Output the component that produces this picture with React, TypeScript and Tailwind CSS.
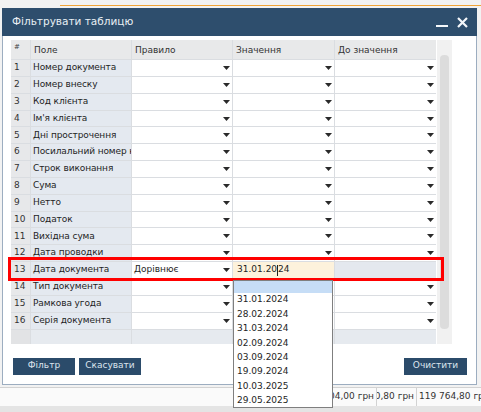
import React from 'react';

const fields = [
  'Номер документа',
  'Номер внеску',
  'Код клієнта',
  "Ім'я клієнта",
  'Дні прострочення',
  'Посилальний номер клієнта',
  'Строк виконання',
  'Сума',
  'Нетто',
  'Податок',
  'Вихідна сума',
  'Дата проводки',
  'Дата документа',
  'Тип документа',
  'Рамкова угода',
  'Серія документа',
];

const dates = [
  '31.01.2024',
  '28.02.2024',
  '31.03.2024',
  '02.09.2024',
  '03.09.2024',
  '19.09.2024',
  '10.03.2025',
  '29.05.2025',
];

const Arrow = () => (
  <svg width="7" height="4" viewBox="0 0 7 4" className="absolute right-[2px] top-[6px]">
    <path d="M0 0H7L3.5 4Z" fill="#2a2a2a" />
  </svg>
);

const DropCell = ({ children, arrow = true, className = 'bg-white' }: { children?: React.ReactNode; arrow?: boolean; className?: string }) => (
  <div className={`relative h-[15.85px] flex items-center pl-[2px] overflow-hidden whitespace-nowrap ${className}`}>
    {children}
    {arrow && <Arrow />}
  </div>
);

export default function App() {
  return (
    <div className="relative w-[481px] h-[412px] overflow-hidden bg-[#f2f2f2] font-['DejaVu_Sans',Verdana,sans-serif] text-[9px] text-[#1e1e1e]">
      <div className="h-[5px]" />
      <div className="h-px ml-[60px] bg-[#f0a437]" />
      <div className="h-[2px]" />

      {/* dialog */}
      <div className="ml-[2px] w-[475px] h-[377px] flex flex-col">
        <div className="h-[28px] shrink-0 bg-[#2e4e6d] flex items-center pl-[10px] pr-[8px] text-[#e8eef4] text-[10.5px]">
          <span className="flex-1">Фільтрувати таблицю</span>
          <span className="w-[12px] h-[2px] bg-[#f4f7fa] mt-[8px] mr-[9px]" />
          <svg width="11" height="11" viewBox="0 0 11 11" className="mr-[1px]">
            <path d="M1 1L10 10M10 1L1 10" stroke="#f4f7fa" strokeWidth="2.2" />
          </svg>
        </div>

        <div className="flex-1 bg-white border-x border-b border-[#9cadc0] pl-[8px] pt-[4px] flex flex-col">
          <div className="flex">
            <div className="grid grid-cols-[19px_100px_100px_101px_101px] gap-px bg-[#dadde1]">
              {/* header */}
              <div className="h-[19px] bg-[#e8e9ea] pl-[3px] pt-[2px] text-[7px] text-[#444]">#</div>
              <div className="h-[19px] bg-[#e8e9ea] pl-[3px] flex items-center pt-[2px] text-[#333]">Поле</div>
              <div className="h-[19px] bg-[#e8e9ea] pl-[3px] flex items-center pt-[2px] text-[#333]">Правило</div>
              <div className="h-[19px] bg-[#e8e9ea] pl-[3px] flex items-center pt-[2px] text-[#333]">Значення</div>
              <div className="h-[19px] bg-[#e8e9ea] pl-[3px] flex items-center pt-[2px] text-[#333]">До значення</div>

              {fields.map((f, i) => {
                const active = i === 12;
                return (
                  <React.Fragment key={f}>
                    <div className="h-[15.85px] bg-[#e7e8ea] pl-[3px] flex items-center text-[#333]">{i + 1}</div>
                    <div className="h-[15.85px] bg-[#e4e9f0] pl-[2px] flex items-center overflow-hidden whitespace-nowrap tracking-[-0.1px]">{f}</div>
                    <DropCell>{active ? 'Дорівнює' : null}</DropCell>
                    {active ? (
                      <div className="h-[15.85px] bg-[#fdf2dc] pl-[4px] flex items-center whitespace-nowrap">
                        31.01.20<span className="inline-block w-px h-[11px] bg-[#222]" />24
                      </div>
                    ) : (
                      <DropCell />
                    )}
                    {active ? <div className="h-[15.85px] bg-[#e4e8ee]" /> : <DropCell />}
                  </React.Fragment>
                );
              })}

              {/* empty row */}
              <div className="h-[14px] bg-[#e2e3e5]" />
              <div className="h-[14px] bg-[#e6eaef]" />
              <div className="h-[14px] bg-[#e6eaef]" />
              <div className="h-[14px] bg-[#e6eaef]" />
              <div className="h-[14px] bg-[#e6eaef]" />
            </div>

            {/* scrollbar */}
            <div className="ml-[1px] w-[15px] bg-[#f1f1f1] flex flex-col">
              <div className="mt-[15px] mx-[3px] h-[274px] rounded-[4px] bg-[#dcdcdc]" />
            </div>
          </div>

          <div className="flex mt-[14px] pr-[9px] text-[#dce5ee]">
            <div className="ml-[2px] w-[62px] h-[17px] bg-[#2b4b6a] flex items-center justify-center">Фільтр</div>
            <div className="ml-[4px] w-[62px] h-[17px] bg-[#2b4b6a] flex items-center justify-center">Скасувати</div>
            <div className="ml-auto w-[63px] h-[17px] bg-[#2b4b6a] flex items-center justify-center">Очистити</div>
          </div>
        </div>
      </div>

      {/* status bar */}
      <div className="mt-[2px] h-[19px] bg-[#fafafa] border-t border-[#d2d2d2] flex text-[#333]">
        <div className="ml-[250px] w-[127px] flex justify-end items-center overflow-hidden pr-[2px] border-r border-[#d2d2d2]">
          <span className="shrink-0 whitespace-nowrap">120 904,00 грн</span>
        </div>
        <div className="w-[40px] flex justify-end items-center overflow-hidden pr-[2px] border-r border-[#d2d2d2]">
          <span className="shrink-0 whitespace-nowrap">8 870,80 грн</span>
        </div>
        <div className="flex-1 flex items-center overflow-hidden pl-[2px]">
          <span className="shrink-0 whitespace-nowrap">119 764,80 грн</span>
        </div>
      </div>
      <div className="h-[10px] bg-[#e4e4e4]" />

      {/* highlight */}
      <div className="absolute left-[8px] top-[257px] w-[436px] h-[24px] border-[3px] border-[#ff0000]" />

      {/* date dropdown */}
      <div className="absolute left-[233px] top-[280px] w-[100px] h-[128px] bg-white border border-[#7f7f7f] flex flex-col">
        <div className="h-[12px] shrink-0 bg-[#c6ddf6]" />
        {dates.map((d) => (
          <div key={d} className="h-[14.4px] shrink-0 pl-[3px] flex items-center">{d}</div>
        ))}
      </div>
    </div>
  );
}
